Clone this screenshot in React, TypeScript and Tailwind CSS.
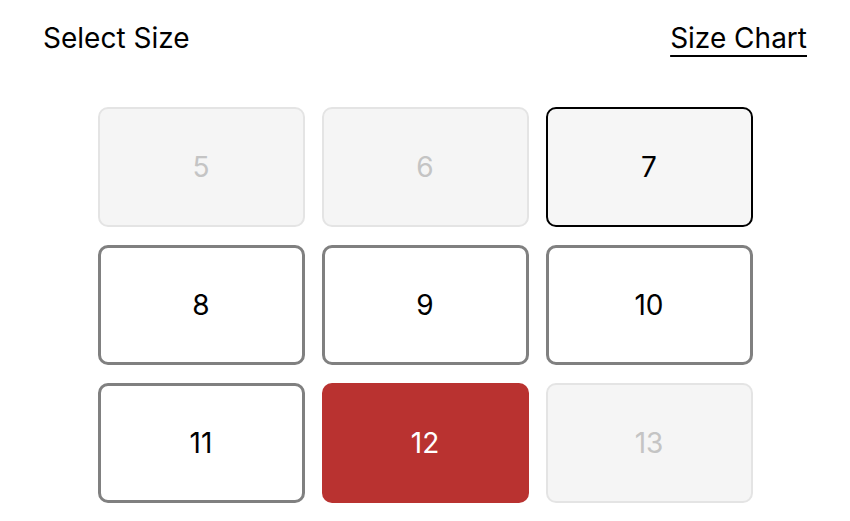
type SizeState = "disabled" | "outlined" | "available" | "selected";

interface SizeOption {
  label: string;
  state: SizeState;
}

const sizes: SizeOption[] = [
  { label: "5", state: "disabled" },
  { label: "6", state: "disabled" },
  { label: "7", state: "outlined" },
  { label: "8", state: "available" },
  { label: "9", state: "available" },
  { label: "10", state: "available" },
  { label: "11", state: "available" },
  { label: "12", state: "selected" },
  { label: "13", state: "disabled" },
];

const stateClasses: Record<SizeState, string> = {
  disabled: "bg-[#f5f5f5] border-2 border-[#e4e4e4] text-[#c4c4c4]",
  outlined: "bg-[#f6f6f6] border-2 border-black text-black",
  available: "bg-white border-[3px] border-[#808080] text-black",
  selected: "bg-[#b93230] text-white",
};

function SizeButton({ size }: { size: SizeOption }) {
  return (
    <button
      disabled={size.state === "disabled"}
      className={`h-[120px] rounded-[10px] flex items-center justify-center text-[28px] ${stateClasses[size.state]}`}
    >
      {size.label}
    </button>
  );
}

export default function App() {
  return (
    <div className="w-[850px] h-[521px] bg-white font-['Inter',sans-serif] text-black">
      {/* Header */}
      <div className="flex justify-between items-center px-[43px] pt-[20px]">
        <span className="text-[28px] leading-[36px]">Select Size</span>
        <a className="text-[28px] leading-[36px] underline underline-offset-[7px] decoration-2">Size Chart</a>
      </div>

      {/* Size grid */}
      <div className="w-[655px] mx-auto mt-[51px] grid grid-cols-3 gap-x-[17px] gap-y-[18px]">
        {sizes.map((s) => (
          <SizeButton key={s.label} size={s} />
        ))}
      </div>
    </div>
  );
}
